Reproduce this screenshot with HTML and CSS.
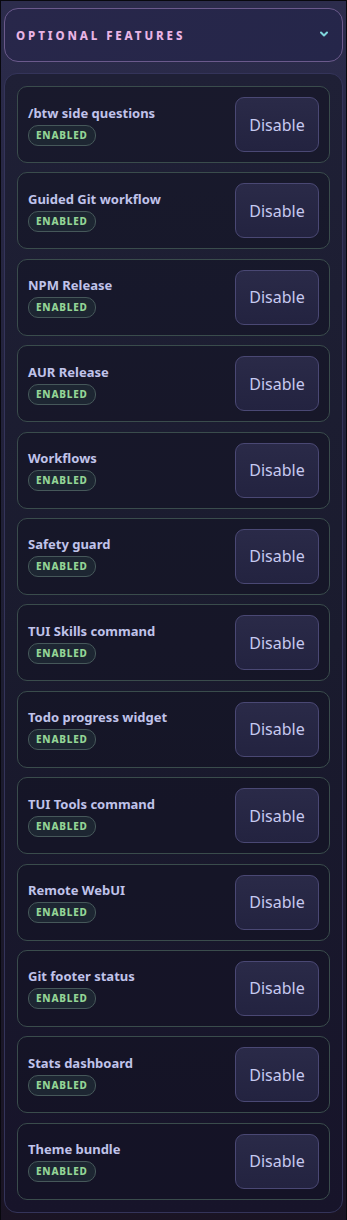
FILE: index.html
```html
<!DOCTYPE html>
<html lang="en">
<head>
    <meta charset="UTF-8">
    <meta name="viewport" content="width=device-width, initial-scale=1.0">
    <title>Optional features</title>
    <link rel="stylesheet" href="styles.css">
</head>
<body>
<div class="frame">
    <div class="section-head">
        <span class="section-title">Optional features</span>
        <svg class="chevron" width="8" height="6" viewBox="0 0 8 6">
            <path d="M1 1.5 L4 4.5 L7 1.5" fill="none" stroke="#7fd6dc" stroke-width="2" stroke-linecap="round" stroke-linejoin="round"/>
        </svg>
    </div>

    <div class="panel">
        <div class="feature">
            <div class="info"><div class="name">/btw side questions</div><span class="badge">Enabled</span></div>
            <button class="toggle">Disable</button>
        </div>
        <div class="feature">
            <div class="info"><div class="name">Guided Git workflow</div><span class="badge">Enabled</span></div>
            <button class="toggle">Disable</button>
        </div>
        <div class="feature">
            <div class="info"><div class="name">NPM Release</div><span class="badge">Enabled</span></div>
            <button class="toggle">Disable</button>
        </div>
        <div class="feature">
            <div class="info"><div class="name">AUR Release</div><span class="badge">Enabled</span></div>
            <button class="toggle">Disable</button>
        </div>
        <div class="feature">
            <div class="info"><div class="name">Workflows</div><span class="badge">Enabled</span></div>
            <button class="toggle">Disable</button>
        </div>
        <div class="feature">
            <div class="info"><div class="name">Safety guard</div><span class="badge">Enabled</span></div>
            <button class="toggle">Disable</button>
        </div>
        <div class="feature">
            <div class="info"><div class="name">TUI Skills command</div><span class="badge">Enabled</span></div>
            <button class="toggle">Disable</button>
        </div>
        <div class="feature">
            <div class="info"><div class="name">Todo progress widget</div><span class="badge">Enabled</span></div>
            <button class="toggle">Disable</button>
        </div>
        <div class="feature">
            <div class="info"><div class="name">TUI Tools command</div><span class="badge">Enabled</span></div>
            <button class="toggle">Disable</button>
        </div>
        <div class="feature">
            <div class="info"><div class="name">Remote WebUI</div><span class="badge">Enabled</span></div>
            <button class="toggle">Disable</button>
        </div>
        <div class="feature">
            <div class="info"><div class="name">Git footer status</div><span class="badge">Enabled</span></div>
            <button class="toggle">Disable</button>
        </div>
        <div class="feature">
            <div class="info"><div class="name">Stats dashboard</div><span class="badge">Enabled</span></div>
            <button class="toggle">Disable</button>
        </div>
        <div class="feature">
            <div class="info"><div class="name">Theme bundle</div><span class="badge">Enabled</span></div>
            <button class="toggle">Disable</button>
        </div>
    </div>
</div>
</body>
</html>
```

FILE: styles.css
```css
html, body {
    margin: 0;
    padding: 0;
    background: #0a0a12;
}

body {
    font-family: "Noto Sans", "Open Sans", sans-serif;
    color: #c3c6ec;
}

.frame {
    height: 1218px;
    border: 1px solid #08080e;
    padding: 7px 3px 0 3px;
    background: linear-gradient(180deg, #2c2c4c 0%, #23233d 30%, #1c1c30 60%, #1a1424 100%);
    overflow: hidden;
}

.section-head {
    height: 52px;
    display: flex;
    align-items: center;
    justify-content: space-between;
    padding: 0 14px 0 11px;
    border: 1px solid #6b5a8c;
    border-radius: 14px;
    background: linear-gradient(135deg, #28274a 0%, #25264a 100%);
}

.section-title {
    font-size: 11.5px;
    font-weight: 800;
    letter-spacing: 2.9px;
    text-transform: uppercase;
    color: #e9b4e4;
}

.chevron {
    margin-top: -3px;
}

.panel {
    margin-top: 11px;
    padding: 12px;
    border: 1px solid #34345a;
    border-radius: 13px;
    background: linear-gradient(180deg, #1f2036 0%, #1a1b2e 50%, #17142a 100%);
    display: flex;
    flex-direction: column;
    gap: 9.4px;
}

.feature {
    display: flex;
    align-items: center;
    justify-content: space-between;
    padding: 10px;
    border: 1px solid #3a4c4c;
    border-radius: 10px;
    background: rgba(18, 18, 34, 0.45);
}

.info {
    display: flex;
    flex-direction: column;
    align-items: flex-start;
    gap: 3px;
}

.name {
    font-size: 13px;
    font-weight: 700;
    color: #c0c3ea;
    line-height: 18px;
}

.badge {
    height: 19px;
    line-height: 19px;
    padding: 0 7px;
    border: 1px solid #46585a;
    border-radius: 10px;
    background: #1d2632;
    font-size: 10px;
    font-weight: 800;
    letter-spacing: 0.8px;
    text-transform: uppercase;
    color: #93d596;
}

.toggle {
    width: 84px;
    height: 55px;
    border: 1px solid #4a4874;
    border-radius: 9px;
    background: linear-gradient(180deg, #2a2a48 0%, #232340 100%);
    font-family: "Noto Sans", "Open Sans", sans-serif;
    font-size: 16px;
    color: #c6c9f0;
    cursor: pointer;
}
```
